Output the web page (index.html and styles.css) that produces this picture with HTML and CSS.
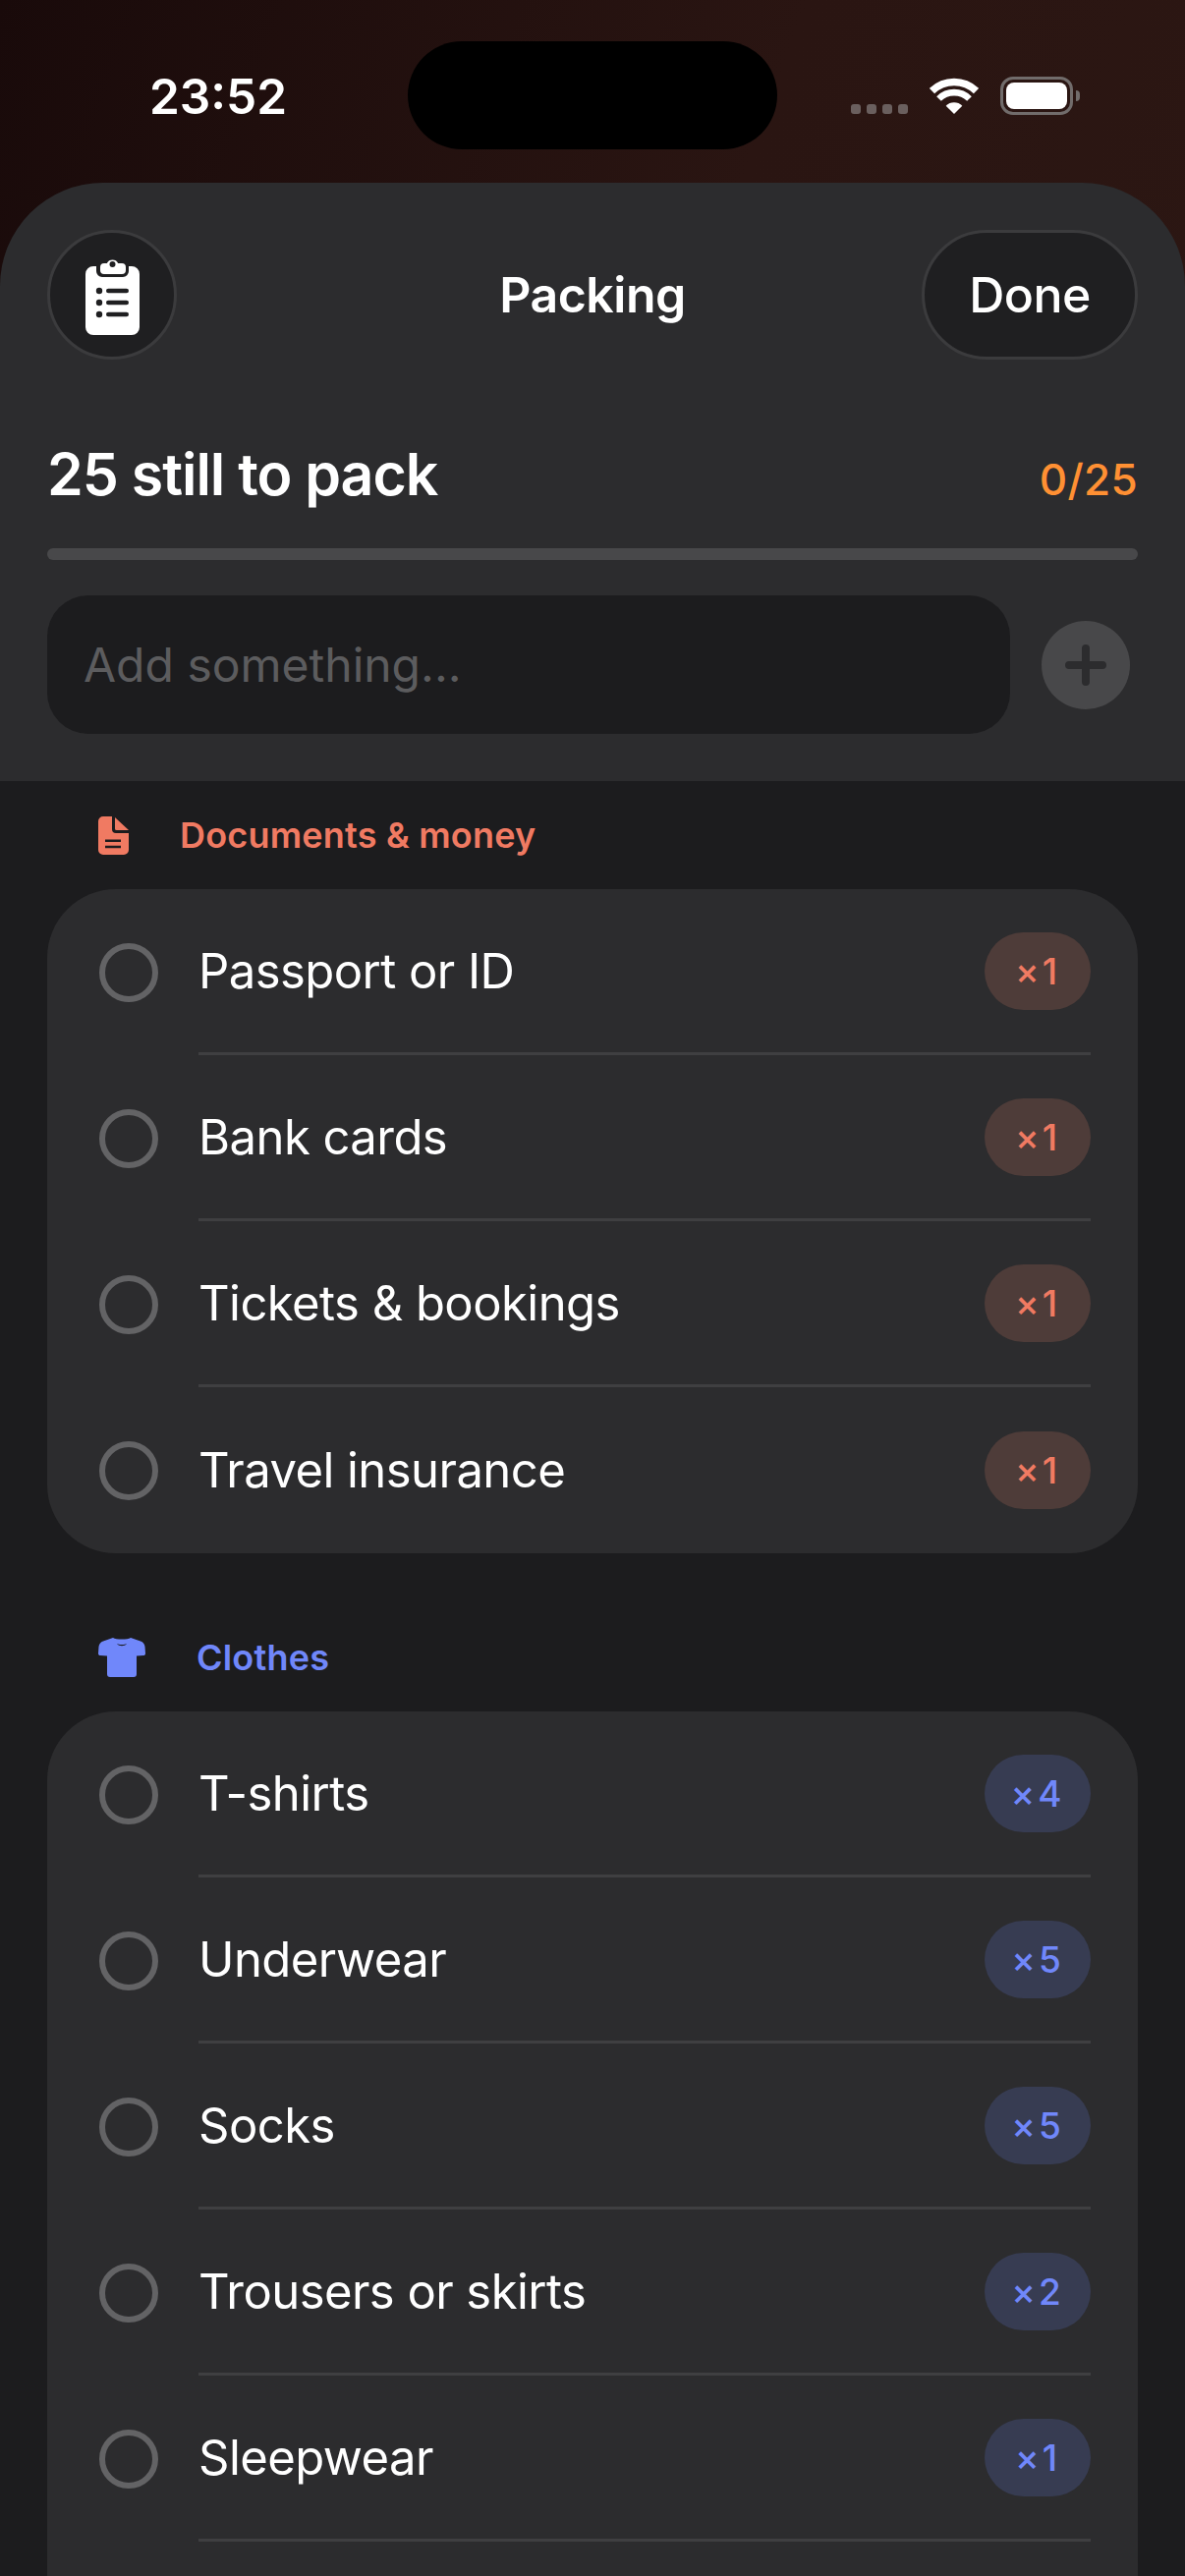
FILE: index.html
```html
<!DOCTYPE html>
<html lang="en">
<head>
  <meta charset="UTF-8" />
  <title>Packing</title>
  <link rel="stylesheet" href="styles.css">
</head>
<body>

<div class="phone">
  <div class="top">
    <div class="status-bar">
      <div class="time">23:52</div>
      <div class="island"></div>
      <div class="status-icons">
        <div class="signal"><span></span><span></span><span></span><span></span></div>
        <svg class="wifi" width="50" height="37" viewBox="0 0 50 37">
          <path d="M2.5 13.5 A32.5 32.5 0 0 1 47.5 13.5" fill="none" stroke="#fff" stroke-width="7.5"/>
          <path d="M9.5 21.5 A22 22 0 0 1 40.5 21.5" fill="none" stroke="#fff" stroke-width="6.6"/>
          <path d="M25 37 L16.7 28.7 A11.7 11.7 0 0 1 33.3 28.7 Z" fill="#fff"/>
        </svg>
        <div class="battery"><div class="battery-fill"></div></div>
      </div>
    </div>

    <div class="sheet-head">
      <div class="nav">
        <div class="round-btn icon-btn">
          <svg class="clipboard" width="55" height="78" viewBox="0 0 55 78">
            <path d="M8 8 H11 V13 A6 6 0 0 0 17 19 H38 A6 6 0 0 0 44 13 V8 H47 A8 8 0 0 1 55 16 V70 A8 8 0 0 1 47 78 H8 A8 8 0 0 1 0 70 V16 A8 8 0 0 1 8 8 Z" fill="#fff"/>
            <path d="M19 5 H21.8 A6.5 6.5 0 0 1 33.2 5 H37 A4 4 0 0 1 41 9 V12 A4 4 0 0 1 37 16 H19 A4 4 0 0 1 15 12 V9 A4 4 0 0 1 19 5 Z" fill="#fff"/>
            <g fill="#1f1f21">
              <circle cx="27.5" cy="6" r="3"/>
              <circle cx="14" cy="33" r="3.2"/><circle cx="14" cy="45" r="3.2"/><circle cx="14" cy="57" r="3.2"/>
              <rect x="21" y="30.7" width="23" height="4.6" rx="2.3"/><rect x="21" y="42.7" width="23" height="4.6" rx="2.3"/><rect x="21" y="54.7" width="23" height="4.6" rx="2.3"/>
            </g>
          </svg>
        </div>
        <div class="nav-title">Packing</div>
        <div class="round-btn done-btn">Done</div>
      </div>

      <div class="summary">
        <div class="summary-title">25 still to pack</div>
        <div class="summary-count">0/25</div>
      </div>
      <div class="progress"></div>

      <div class="add-row">
        <div class="add-input">Add something...</div>
        <div class="add-btn">
          <svg width="42" height="42" viewBox="0 0 42 42"><path d="M21 4 V38 M4 21 H38" stroke="#2c2c2e" stroke-width="8" stroke-linecap="round"/></svg>
        </div>
      </div>
    </div>
  </div>

  <div class="list">
    <div class="section docs">
      <div class="section-head">
        <svg class="section-icon" width="31" height="39" viewBox="0 0 31 39">
          <path fill-rule="evenodd" d="M5 0 H14 V13 A4 4 0 0 0 18 17 H31 V34 A5 5 0 0 1 26 39 H5 A5 5 0 0 1 0 34 V5 A5 5 0 0 1 5 0 Z M7 23.5 V26 H23 V23.5 Z M7 29.7 V32.2 H23 V29.7 Z" fill="currentColor"/>
          <path d="M17 1 L31 14 H18.5 A1.5 1.5 0 0 1 17 12.5 Z" fill="currentColor"/>
        </svg>
        <span class="section-name">Documents &amp; money</span>
      </div>
      <div class="card">
        <div class="row"><div class="check"></div><div class="row-body"><span class="row-name">Passport or ID</span><span class="qty">×1</span></div></div>
        <div class="row"><div class="check"></div><div class="row-body"><span class="row-name">Bank cards</span><span class="qty">×1</span></div></div>
        <div class="row"><div class="check"></div><div class="row-body"><span class="row-name">Tickets &amp; bookings</span><span class="qty">×1</span></div></div>
        <div class="row"><div class="check"></div><div class="row-body"><span class="row-name">Travel insurance</span><span class="qty">×1</span></div></div>
      </div>
    </div>

    <div class="section clothes">
      <div class="section-head">
        <svg class="section-icon" width="48" height="40" viewBox="0 0 48 40">
          <path fill-rule="evenodd" d="M15 0 C18 2 30 2 33 0 L43 3.5 C45.5 4.5 47 6 47.5 9 L48 16 C48 17.5 47 18 46 18 L39 18.5 V37 C39 39 38 40 36 40 H12 C10 40 9 39 9 37 V18.5 L2 18 C1 18 0 17.5 0 16 L.5 9 C1 6 2.5 4.5 5 3.5 Z M19 6 C21 9 27 9 29 6 L27 6.8 C25.5 7.2 22.5 7.2 21 6.8 Z" fill="currentColor"/>
        </svg>
        <span class="section-name">Clothes</span>
      </div>
      <div class="card">
        <div class="row"><div class="check"></div><div class="row-body"><span class="row-name">T-shirts</span><span class="qty">×4</span></div></div>
        <div class="row"><div class="check"></div><div class="row-body"><span class="row-name">Underwear</span><span class="qty">×5</span></div></div>
        <div class="row"><div class="check"></div><div class="row-body"><span class="row-name">Socks</span><span class="qty">×5</span></div></div>
        <div class="row"><div class="check"></div><div class="row-body"><span class="row-name">Trousers or skirts</span><span class="qty">×2</span></div></div>
        <div class="row"><div class="check"></div><div class="row-body"><span class="row-name">Sleepwear</span><span class="qty">×1</span></div></div>
        <div class="row"></div>
      </div>
    </div>
  </div>
</div>

</body>
</html>
```

FILE: styles.css
```css
* { box-sizing: border-box; }
body {
  margin: 0;
  font-family: 'Inter', sans-serif;
  background: #1c1c1e;
  color: white;
}
.phone {
  width: 1206px;
  height: 2622px;
  overflow: hidden;
  background: #1c1c1e;
}
.top {
  background: linear-gradient(110deg, #190a0a, #2a1512 55%, #2c1713);
}

/* status bar */
.status-bar {
  height: 186px;
  padding-top: 42px;
  display: flex;
  align-items: flex-start;
  position: relative;
}
.time {
  margin: 28px 0 0 152px;
  font-size: 49.5px;
  line-height: 56px;
  font-weight: 600;
}
.island {
  position: absolute;
  left: 415px;
  top: 42px;
  width: 376px;
  height: 110px;
  border-radius: 55px;
  background: #000;
}
.status-icons {
  margin-left: auto;
  margin-right: 114px;
  margin-top: 36px;
  display: flex;
  align-items: flex-end;
  gap: 22px;
}
.signal { display: flex; gap: 6px; margin-bottom: 1px; }
.signal span {
  width: 10px;
  height: 10px;
  border-radius: 3px;
  background: #6a5f5e;
}
.wifi { margin-bottom: 1px; }
.battery {
  width: 74px;
  height: 39px;
  border: 3px solid #716c6b;
  border-radius: 13px;
  padding: 3px;
  position: relative;
}
.battery:after {
  content: "";
  position: absolute;
  right: -10px;
  top: 11px;
  width: 4px;
  height: 11px;
  border-radius: 0 5px 5px 0;
  background: #716c6b;
}
.battery-fill {
  height: 100%;
  border-radius: 8px;
  background: #fff;
}

/* sheet header */
.sheet-head {
  height: 609px;
  padding: 48px 48px 0;
  background: #2c2c2e;
  border-radius: 105px 105px 0 0;
}
.nav {
  display: grid;
  grid-template-columns: 1fr auto 1fr;
  align-items: center;
  height: 132px;
}
.round-btn {
  height: 132px;
  border-radius: 66px;
  background: #1f1f21;
  border: 3px solid #3b3b3d;
  display: flex;
  align-items: center;
  justify-content: center;
}
.icon-btn { width: 132px; }
.clipboard { margin-top: 4px; }
.done-btn {
  width: 220px;
  justify-self: end;
  font-size: 50px;
  font-weight: 500;
  letter-spacing: -.5px;
}
.nav-title {
  font-size: 50px;
  font-weight: 600;
  letter-spacing: -.5px;
}
.summary {
  display: flex;
  justify-content: space-between;
  align-items: baseline;
  margin-top: 81px;
  height: 70px;
}
.summary-title {
  font-size: 59px;
  font-weight: 600;
  letter-spacing: -1px;
}
.summary-count {
  font-size: 44px;
  font-weight: 500;
  letter-spacing: .3px;
  color: #ff9033;
}
.progress {
  height: 12px;
  margin-top: 41px;
  border-radius: 6px;
  background: #48484a;
}
.add-row {
  display: flex;
  align-items: center;
  margin-top: 36px;
}
.add-input {
  width: 980px;
  height: 141px;
  padding-left: 37px;
  display: flex;
  align-items: center;
  border-radius: 42px;
  background: #1c1c1e;
  font-size: 48px;
  color: #5c5c5e;
}
.add-btn {
  width: 90px;
  height: 90px;
  margin-left: 32px;
  border-radius: 50%;
  background: #48484a;
  display: flex;
  align-items: center;
  justify-content: center;
}

/* list */
.list { padding: 30px 48px 0; }
.section-head {
  height: 50px;
  display: flex;
  align-items: center;
  margin-bottom: 30px;
  padding-left: 52px;
}
.section-name {
  font-size: 36px;
  font-weight: 600;
  letter-spacing: .2px;
}
.section-icon { margin-right: 52px; }
.docs { color: #f07a62; --qty-bg: #4e3c39; }
.clothes { color: #7087fa; --qty-bg: #373c52; margin-top: 81px; }
.card {
  background: #2c2c2e;
  border-radius: 70px;
  padding: 0 48px 0 53px;
}
.row {
  display: flex;
  align-items: center;
  height: 169px;
}
.check {
  width: 60px;
  height: 60px;
  flex: none;
  border: 6px solid #636365;
  border-radius: 50%;
  margin-right: 41px;
}
.row-body {
  flex: 1;
  height: 100%;
  display: flex;
  align-items: center;
  justify-content: space-between;
  border-bottom: 3px solid #3f3f41;
}
.row:nth-child(4):last-child .row-body { border-bottom: 0; }
.row-name {
  font-size: 49px;
  color: #fff;
  letter-spacing: -.55px;
}
.qty {
  width: 108px;
  height: 79px;
  border-radius: 40px;
  background: var(--qty-bg);
  display: flex;
  align-items: center;
  justify-content: center;
  font-size: 37px;
  font-weight: 500;
  letter-spacing: 3px;
}
```
